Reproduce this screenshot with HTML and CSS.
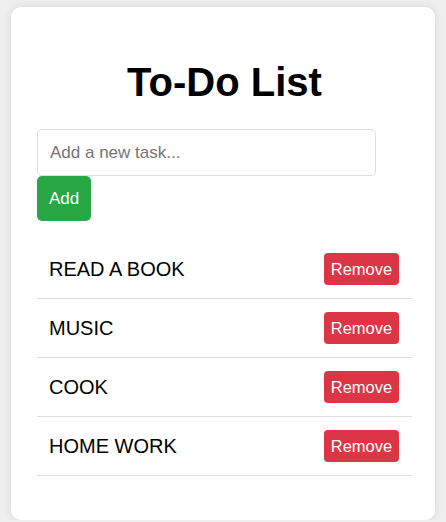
FILE: index.html
```html
<!DOCTYPE html>
<html lang="en">
<head>
<meta charset="utf-8">
<title>To-Do List</title>
<link rel="stylesheet" href="styles.css">
</head>
<body>
<div class="card">
  <h1 class="title">To-Do List</h1>
  <div class="form">
    <input class="task-input" type="text" placeholder="Add a new task...">
    <button class="btn-add">Add</button>
  </div>
  <ul class="list">
    <li class="item"><span class="item-text">READ A BOOK</span><button class="btn-remove">Remove</button></li>
    <li class="item"><span class="item-text">MUSIC</span><button class="btn-remove">Remove</button></li>
    <li class="item"><span class="item-text">COOK</span><button class="btn-remove">Remove</button></li>
    <li class="item"><span class="item-text">HOME WORK</span><button class="btn-remove">Remove</button></li>
  </ul>
</div>
</body>
</html>
```
FILE: styles.css
```css
html, body {
  margin: 0;
  padding: 0;
}
body {
  background: #efefef;
  font-family: "Liberation Sans", Arial, sans-serif;
  color: #000;
}
.card {
  box-sizing: border-box;
  width: 424px;
  height: 513px;
  margin: 7px auto 0;
  padding: 25px 23px 25px 26px;
  background: #fff;
  border-radius: 10px;
  box-shadow: 0 0 10px rgba(0, 0, 0, 0.1);
}
.title {
  margin: 27px 0 24px;
  font-size: 40px;
  font-weight: bold;
  line-height: 46px;
  text-align: center;
}
.form {
  display: flex;
  flex-direction: column;
  align-items: flex-start;
}
.task-input {
  box-sizing: border-box;
  width: 339px;
  height: 47px;
  padding: 0 12px;
  border: 1px solid #ddd;
  border-radius: 5px;
  font-family: inherit;
  font-size: 17px;
  color: #000;
  outline: none;
}
.task-input::placeholder {
  color: #757575;
}
.btn-add {
  box-sizing: border-box;
  width: 54px;
  height: 45px;
  padding: 0;
  border: none;
  border-radius: 5px;
  background: #28a745;
  color: #fff;
  font-family: inherit;
  font-size: 17px;
}
.list {
  list-style: none;
  margin: 19px 0 0;
  padding: 0;
}
.item {
  display: flex;
  align-items: center;
  justify-content: space-between;
  height: 58px;
  padding: 0 13px 0 12px;
  border-bottom: 1px solid #ddd;
}
.item-text {
  font-size: 20px;
}
.btn-remove {
  box-sizing: border-box;
  width: 75px;
  height: 32px;
  padding: 0;
  border: none;
  border-radius: 4px;
  background: #dc3545;
  color: #fff;
  font-family: inherit;
  font-size: 16.5px;
}
```
